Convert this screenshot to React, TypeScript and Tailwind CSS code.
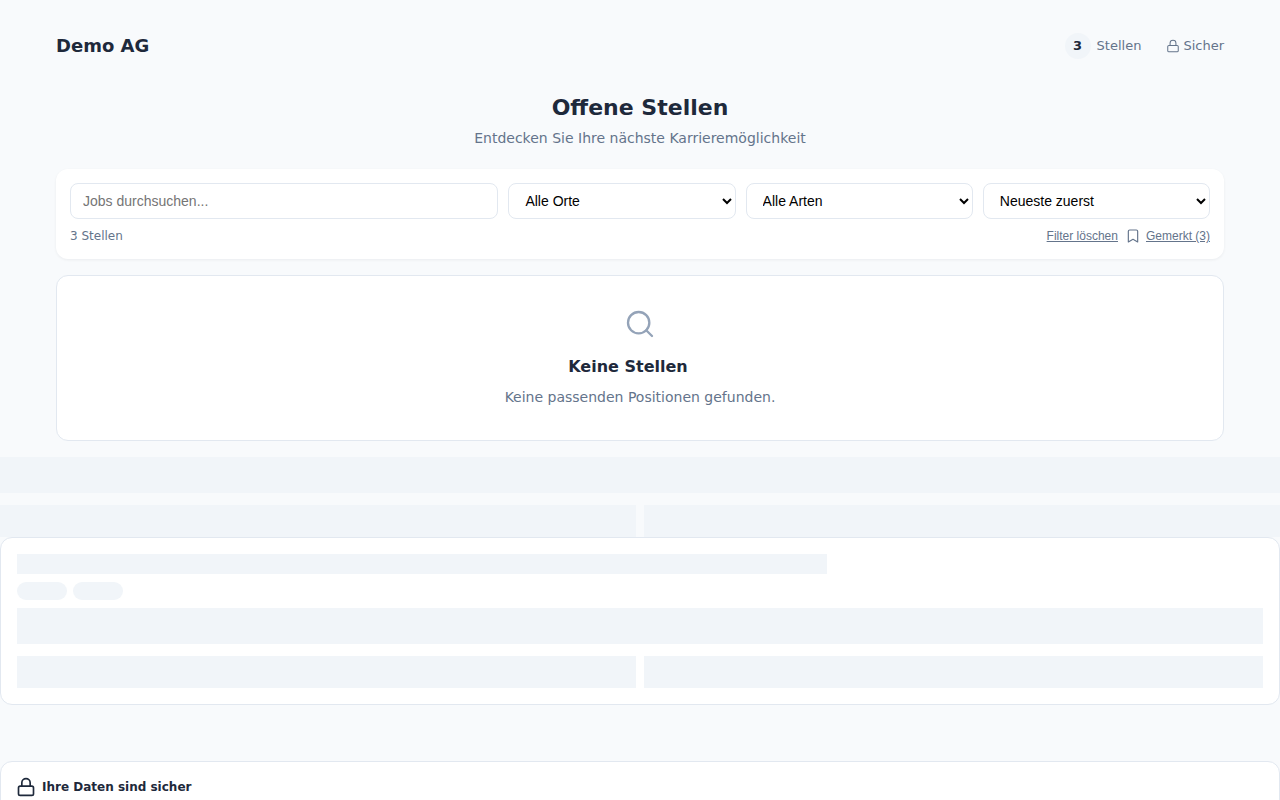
import { Bookmark, Lock, Search } from "lucide-react";

const sans = "font-['DejaVu_Sans',sans-serif]";
const arial = "font-['Liberation_Sans',Arial,sans-serif]";
const fieldClass = `h-9 w-full rounded-lg border border-[#e2e8f0] bg-white text-sm text-black outline-none ${arial}`;

function SkeletonBar({ className }: { className: string }) {
  return <div className={`bg-[#f1f5f9] ${className}`} />;
}

function FilterCard() {
  return (
    <div className="rounded-xl bg-white p-3.5 shadow-[0_1px_3px_rgba(15,23,42,0.06)]">
      <div className="grid grid-cols-[428.4px_1fr_1fr_1fr] gap-2.5">
        <input className={`${fieldClass} px-3 placeholder:text-[#757575]`} placeholder="Jobs durchsuchen..." readOnly />
        <select className={`${fieldClass} px-3`}>
          <option>Alle Orte</option>
        </select>
        <select className={`${fieldClass} px-3`}>
          <option>Alle Arten</option>
        </select>
        <select className={`${fieldClass} px-3`}>
          <option>Neueste zuerst</option>
        </select>
      </div>
      <div className="mt-2 flex h-[18px] items-center justify-between">
        <span className="text-xs text-[#64748b]">3 Stellen</span>
        <div className={`flex items-center text-xs text-[#64748b] ${arial}`}>
          <button className="underline">Filter löschen</button>
          <Bookmark className="ml-[7px] mr-[5px] h-4 w-4" strokeWidth={1.75} />
          <button className="underline">Gemerkt (3)</button>
        </div>
      </div>
    </div>
  );
}

function EmptyState() {
  return (
    <div className="mt-4 flex h-[166px] flex-col items-center rounded-xl border border-[#e2e8f0] bg-white pt-[32px]">
      <Search className="h-8 w-8 text-[#94a3b8]" strokeWidth={1.75} />
      <h3 className="mt-[15px] pr-6 text-base leading-6 font-bold text-[#1e293b]">Keine Stellen</h3>
      <p className="mt-[6px] text-sm leading-6 text-[#64748b]">Keine passenden Positionen gefunden.</p>
    </div>
  );
}

function SkeletonCard() {
  return (
    <div className="rounded-xl border border-[#e2e8f0] bg-white p-4">
      <SkeletonBar className="h-5 w-[65%]" />
      <div className="mt-2 flex gap-1.5">
        <SkeletonBar className="h-[18px] w-[50px] rounded-full" />
        <SkeletonBar className="h-[18px] w-[50px] rounded-full" />
      </div>
      <SkeletonBar className="mt-2 h-9" />
      <div className="mt-3 grid grid-cols-2 gap-2">
        <SkeletonBar className="h-8" />
        <SkeletonBar className="h-8" />
      </div>
    </div>
  );
}

export default function App() {
  return (
    <div className={`h-screen overflow-hidden bg-[#f8fafc] ${sans}`}>
      <div className="px-14">
        <header className="flex h-[91px] items-center justify-between">
          <span className="text-lg font-bold text-[#1e293b]">Demo AG</span>
          <div className="flex items-center text-[13px] text-[#64748b]">
            <span className="flex h-[26px] w-[26px] items-center justify-center rounded-full bg-[#f1f5f9] font-bold text-[#1e293b]">3</span>
            <span className="ml-[6px]">Stellen</span>
            <Lock className="ml-[25px] mr-[3px] h-3.5 w-3.5" strokeWidth={1.75} />
            <span>Sicher</span>
          </div>
        </header>
        <div className="text-center">
          <h1 className="mt-px text-[22px] leading-8 font-bold text-[#1e293b]">Offene Stellen</h1>
          <p className="mt-[2px] text-sm leading-6 text-[#64748b]">Entdecken Sie Ihre nächste Karrieremöglichkeit</p>
        </div>
        <div className="mt-[19px]">
          <FilterCard />
          <EmptyState />
        </div>
      </div>

      <SkeletonBar className="mt-4 h-9" />
      <div className="mt-3 grid grid-cols-2 gap-2">
        <SkeletonBar className="h-8" />
        <SkeletonBar className="h-8" />
      </div>
      <SkeletonCard />

      <div className="mt-14 rounded-xl border border-[#e2e8f0] bg-white px-[15px] py-[15px]">
        <div className="flex items-center gap-[6px]">
          <Lock className="h-5 w-5 text-[#1e293b]" strokeWidth={2} />
          <span className="text-xs font-bold text-[#1e293b]">Ihre Daten sind sicher</span>
        </div>
      </div>
    </div>
  );
}
